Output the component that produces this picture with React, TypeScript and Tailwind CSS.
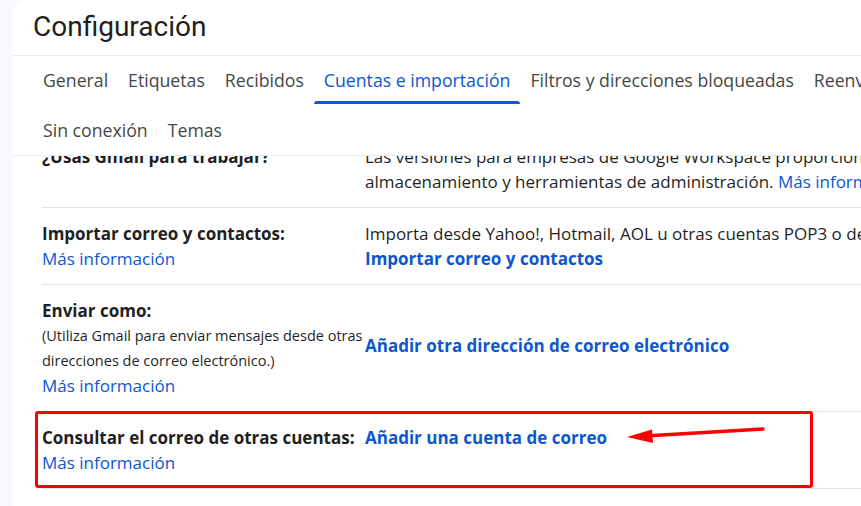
import React from "react";

const tabsRow1 = ["General", "Etiquetas", "Recibidos", "Cuentas e importación", "Filtros y direcciones bloqueadas", "Reenvío y correo POP/IMAP"];
const tabsRow2 = ["Sin conexión", "Temas"];

const Tab = ({ label, active }: { label: string; active?: boolean }) => {
    return (
        <div className={`relative h-[48px] px-[10px] flex items-center whitespace-nowrap ${active ? "text-[#0b57d0]" : "text-[#444746]"}`}>
            {label}
            {active && <span className="absolute left-0 right-0 bottom-0 h-[3px] rounded-t-[3px] bg-[#0b57d0]"></span>}
        </div>
    );
};

const More = () => <span className="text-[#0b57d0]">Más información</span>;

const App = () => {
    return (
        <div className="w-[861px] h-[506px] overflow-hidden bg-[#f6f8fc] pl-3 font-['Open_Sans','Liberation_Sans',sans-serif] text-[#1f1f1f]">
            <div className="relative h-full bg-white rounded-tl-2xl flex flex-col overflow-hidden">

                {/* header */}
                <div className="h-[56px] shrink-0 border-b border-[#ececec] pl-[21px] flex items-center">
                    <h1 className="font-['Roboto',sans-serif] text-[28px] leading-none text-[#1f1f1f] -mt-[2px]">Configuración</h1>
                </div>

                <div className="shrink-0 border-b border-[#ececec] pl-[21px] text-[17.7px] pb-[1px]">
                    <div className="flex">
                        {tabsRow1.map((t) => <Tab key={t} label={t} active={t === "Cuentas e importación"} />)}
                    </div>
                    <div className="flex mt-[2px]">
                        {tabsRow2.map((t) => <Tab key={t} label={t} />)}
                    </div>
                </div>

                {/* scrolled content */}
                <div className="flex-1 overflow-hidden">
                    <div className="-mt-[25px] ml-[30px] text-[17px] leading-[25px]">

                        <div className="flex py-[13px] border-b border-[#e3e3e3]">
                            <div className="w-[323px] shrink-0 font-bold">¿Usas Gmail para trabajar?</div>
                            <div className="whitespace-nowrap">
                                <p>Las versiones para empresas de Google Workspace proporcionan funciones adicionales,</p>
                                <p>almacenamiento y herramientas de administración. <More /></p>
                            </div>
                        </div>

                        <div className="flex py-[13px] border-b border-[#e3e3e3]">
                            <div className="w-[323px] shrink-0">
                                <p className="font-bold">Importar correo y contactos:</p>
                                <More />
                            </div>
                            <div className="whitespace-nowrap">
                                <p>Importa desde Yahoo!, Hotmail, AOL u otras cuentas POP3 o de webmail.</p>
                                <p className="font-bold text-[#0b57d0]">Importar correo y contactos</p>
                            </div>
                        </div>

                        <div className="flex items-center py-[13px] border-b border-[#e3e3e3]">
                            <div className="w-[323px] shrink-0">
                                <p className="font-bold">Enviar como:</p>
                                <p className="text-[14.5px] whitespace-nowrap">(Utiliza Gmail para enviar mensajes desde otras</p>
                                <p className="text-[14.5px] whitespace-nowrap">direcciones de correo electrónico.)</p>
                                <More />
                            </div>
                            <div className="whitespace-nowrap font-bold text-[#0b57d0] mt-[-5px]">Añadir otra dirección de correo electrónico</div>
                        </div>

                        <div className="flex py-[13px] border-b border-[#e3e3e3]">
                            <div className="w-[323px] shrink-0">
                                <p className="font-bold whitespace-nowrap">Consultar el correo de otras cuentas:</p>
                                <More />
                            </div>
                            <div className="whitespace-nowrap font-bold text-[#0b57d0]">Añadir una cuenta de correo</div>
                        </div>

                        <div className="flex py-[13px]">
                            <div className="w-[323px] shrink-0">
                                <p className="font-bold">Conceder acceso a tu cuenta:</p>
                            </div>
                            <div className="whitespace-nowrap font-bold text-[#0b57d0]">Añadir otra cuenta</div>
                        </div>

                    </div>
                </div>

                {/* annotation */}
                <div className="absolute left-[23px] top-[411px] w-[778px] h-[77px] border-[3px] border-[#ff0000] rounded-[3px]"></div>
                <svg className="absolute left-[588px] top-[415px]" width="180" height="35" viewBox="0 0 180 35">
                    <line x1="163" y1="14" x2="45" y2="21" stroke="#ff0000" strokeWidth="3.5" strokeLinecap="round" />
                    <polygon points="27,22 52,14.5 53,28" fill="#ff0000" />
                </svg>

            </div>
        </div>
    );
};

export default App;
